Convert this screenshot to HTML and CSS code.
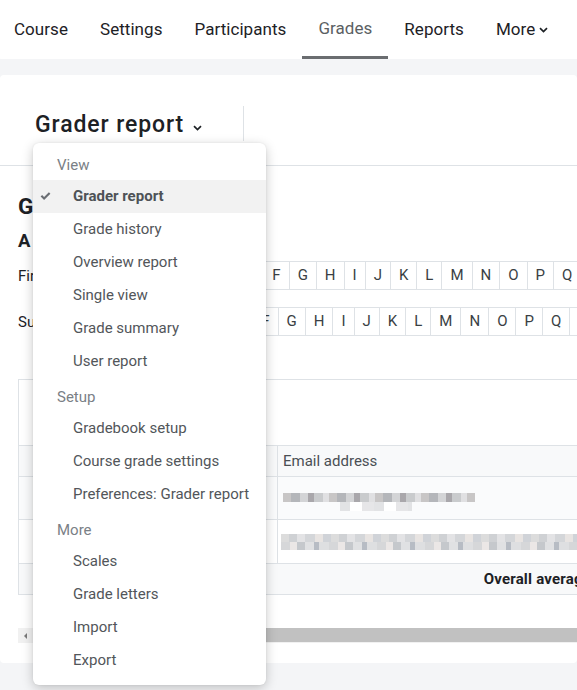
FILE: index.html
```html
<!DOCTYPE html>
<html lang="en">
<head>
<meta charset="utf-8">
<title>Grader report</title>
<link rel="stylesheet" href="styles.css">
</head>
<body>
<nav class="primary">
  <a class="tab">Course</a>
  <a class="tab">Settings</a>
  <a class="tab">Participants</a>
  <a class="tab active">Grades</a>
  <a class="tab">Reports</a>
  <a class="tab">More<svg class="more-chev" width="9" height="6" viewBox="0 0 9 6"><path d="M1 1.2 L4.5 4.6 L8 1.2" fill="none" stroke="#1d2125" stroke-width="1.7"/></svg></a>
</nav>

<main class="card">
  <div class="tertiary">
    <div class="selector">
      <span class="sel-title">Grader report</span>
      <svg class="sel-chev" width="9" height="6" viewBox="0 0 9 6"><path d="M1 1.2 L4.5 4.6 L8 1.2" fill="none" stroke="#1d2125" stroke-width="1.7"/></svg>
    </div>
    <div class="vsep"></div>
  </div>

  <div class="content">
    <h2 class="page-title">Grader report</h2>
    <h3 class="sub-title">All participants: 2/2</h3>

    <div class="initials first">
      <span class="ilabel">First name</span>
      <ul class="letters">
        <li class="all">All</li><li>A</li><li>B</li><li>C</li><li>D</li><li>E</li><li>F</li><li>G</li><li>H</li><li>I</li><li>J</li><li>K</li><li>L</li><li>M</li><li>N</li><li>O</li><li>P</li><li>Q</li><li>R</li><li>S</li><li>T</li>
      </ul>
    </div>
    <div class="initials second">
      <span class="ilabel">Surname</span>
      <ul class="letters">
        <li class="all">All</li><li>A</li><li>B</li><li>C</li><li>D</li><li>E</li><li>F</li><li>G</li><li>H</li><li>I</li><li>J</li><li>K</li><li>L</li><li>M</li><li>N</li><li>O</li><li>P</li><li>Q</li><li>R</li><li>S</li><li>T</li>
      </ul>
    </div>

    <table class="grades">
      <tr class="r-top"><td colspan="3"></td></tr>
      <tr class="r-head"><td class="c-name"></td><td class="c-email">Email address</td><td class="c-rest"></td></tr>
      <tr class="r-user1"><td class="c-name"></td><td class="c-email"><div class="blur b1a"></div><div class="blur b1b"></div></td><td class="c-rest"></td></tr>
      <tr class="r-user2"><td class="c-name"></td><td class="c-email" colspan="2"><div class="blur b2a"></div><div class="blur b2b"></div></td></tr>
      <tr class="r-avg"><td colspan="2" class="c-avg">Overall average</td><td class="c-rest"></td></tr>
    </table>

    <div class="hscroll">
      <div class="hs-btn"><span class="hs-arrow"></span></div>
      <div class="hs-thumb"></div>
    </div>
  </div>
</main>

<div class="menu">
  <div class="m-head">View</div>
  <div class="m-item active"><svg class="check" width="11" height="9" viewBox="0 0 11 9"><path d="M0.6 4.6 L2.1 3.1 L4.1 5.1 L8.9 0.3 L10.4 1.8 L4.1 8.1 Z" fill="#6a6e73"/></svg>Grader report</div>
  <div class="m-item">Grade history</div>
  <div class="m-item">Overview report</div>
  <div class="m-item">Single view</div>
  <div class="m-item">Grade summary</div>
  <div class="m-item">User report</div>
  <div class="m-head group">Setup</div>
  <div class="m-item">Gradebook setup</div>
  <div class="m-item">Course grade settings</div>
  <div class="m-item">Preferences: Grader report</div>
  <div class="m-head group">More</div>
  <div class="m-item">Scales</div>
  <div class="m-item">Grade letters</div>
  <div class="m-item">Import</div>
  <div class="m-item">Export</div>
</div>
</body>
</html>
```

FILE: styles.css
```css
html, body {
  margin: 0;
  padding: 0;
  width: 577px;
  height: 690px;
  overflow: hidden;
}
body {
  position: relative;
  background: #f4f5f7;
  font-family: Roboto, "Liberation Sans", sans-serif;
  color: #1d2125;
}

/* primary navigation */
.primary {
  display: flex;
  height: 59px;
  background: #fff;
  margin-left: -2px;
  border-bottom-left-radius: 4px;
}
.tab {
  display: flex;
  align-items: center;
  padding: 0 16px 2px 16px;
  font-size: 17px;
  letter-spacing: 0.05px;
  color: #1d2125;
  white-space: nowrap;
  box-sizing: border-box;
}
.tab.active {
  color: #5b5f63;
  padding-bottom: 1px;
  border-bottom: 3px solid #6a6d70;
}
.more-chev {
  margin-left: 4px;
  margin-top: 2px;
}

/* page card */
.card {
  margin-top: 16px;
  height: 588px;
  background: #fff;
  overflow: hidden;
  border-radius: 4px;
}
.tertiary {
  display: flex;
  height: 91px;
  border-bottom: 1px solid #dee2e6;
  box-sizing: border-box;
}
.selector {
  width: 208px;
  padding-left: 35px;
  padding-top: 36px;
  display: flex;
  align-items: flex-start;
}
.sel-title {
  font-size: 23px;
  font-weight: 500;
  letter-spacing: 0.9px;
  line-height: 1.2;
  white-space: nowrap;
}
.sel-chev {
  margin-left: 9px;
  margin-top: 14px;
}
.vsep {
  width: 1px;
  height: 35px;
  margin-top: 31px;
  background: #dee2e6;
}

.content {
  padding-left: 18px;
}
.page-title {
  margin: 27px 0 0 0;
  font-size: 22.5px;
  font-weight: 700;
  line-height: 1.2;
  color: #1d2125;
}
.sub-title {
  margin: 10px 0 0 0;
  font-size: 18.5px;
  font-weight: 700;
  letter-spacing: 2px;
  line-height: 1.2;
  color: #1d2125;
}

/* initials bars */
.initials {
  display: flex;
  align-items: center;
  white-space: nowrap;
}
.initials.first { margin-top: 9px; }
.initials.second { margin-top: 17px; }
.ilabel {
  font-size: 15px;
  color: #1d2125;
  margin-right: 9px;
}
.letters {
  display: flex;
  list-style: none;
  margin: 0;
  padding: 0;
}
.letters li {
  font-size: 15px;
  line-height: 27px;
  padding: 0 8px;
  border: 1px solid #dee2e6;
  margin-left: -1px;
  color: #3a3f44;
}
.letters li.all {
  background: #f0f1f3;
}

/* table */
.grades {
  margin-top: 43px;
  border-collapse: collapse;
  width: 900px;
  font-size: 15px;
}
.grades td {
  border: 1px solid #dee2e6;
  padding: 0;
}
.c-name { width: 258px; }
.c-email { width: 318px; padding-left: 5px !important; color: #4a4f54; }
.r-top td { height: 65px; background: #fff; }
.r-head td { height: 30px; background: #f8f9fa; }
.r-user1 td { height: 42px; background: #fafbfc; vertical-align: top; }
.r-user2 td { height: 43px; background: #fff; vertical-align: top; }
.r-avg td { height: 30px; background: #f8f9fa; }
.c-avg {
  text-align: right;
  font-weight: 700;
  letter-spacing: 0.2px;
  padding-right: 10px !important;
  color: #1d2125;
}

.blur { height: 9px; }
.b1a {
  margin-top: 16px;
  width: 192px;
  background: repeating-linear-gradient(90deg, #c8c6c6 0 8px, #b4b6ba 8px 17px, #d3d4d6 17px 25px, #a9a7ab 25px 31px, #c9cbcd 31px 40px, #e0e0e2 40px 46px);
}
.b1b {
  margin-left: 57px;
  width: 72px;
  background: repeating-linear-gradient(90deg, #e2e3e5 0 10px, #ffffff 10px 22px, #e6e6e8 22px 34px);
}
.b2a {
  margin-top: 14px;
  width: 300px;
  height: 8px;
  margin-left: -2px;
  background: repeating-linear-gradient(90deg, #dcdcdc 0 8px, #cfd1d4 8px 16px, #e3e3e5 16px 24px, #d4d6d9 24px 34px, #e8e4e2 34px 42px, #d0d3d8 42px 50px);
}
.b2b {
  width: 300px;
  height: 8px;
  margin-left: -2px;
  background: repeating-linear-gradient(90deg, #d6d7d9 0 9px, #ebe7e6 9px 16px, #c5c8cc 16px 24px, #e0e1e3 24px 33px, #b7bcc4 33px 38px, #dedfe1 38px 48px);
}

/* scrollbar drawing */
.hscroll {
  margin-top: 33px;
  display: flex;
  height: 15px;
  background: #f1f1f1;
  width: 900px;
}
.hs-btn {
  width: 15px;
  display: flex;
  align-items: center;
  justify-content: center;
}
.hs-arrow {
  width: 0;
  height: 0;
  border-top: 3px solid transparent;
  border-bottom: 3px solid transparent;
  border-right: 3px solid #7a7a7a;
}
.hs-thumb {
  flex: 1;
  margin: 0 0 1px 0;
  background: #c1c1c1;
}

/* dropdown menu overlay */
.menu {
  position: absolute;
  left: 33px;
  top: 143px;
  width: 233px;
  padding: 8px 0;
  background: #fff;
  border-radius: 6px;
  box-shadow: 0 3px 12px rgba(0, 0, 0, 0.22), 0 0 2px rgba(0, 0, 0, 0.08);
}
.m-head {
  height: 29px;
  line-height: 29px;
  padding-left: 24px;
  font-size: 15px;
  color: #7a8086;
}
.m-head.group { margin-top: 5px; }
.m-item {
  position: relative;
  height: 33px;
  line-height: 33px;
  padding-left: 40px;
  font-size: 15px;
  color: #52565a;
  white-space: nowrap;
}
.m-item.active {
  background: #f2f2f2;
  font-weight: 700;
  color: #4e5256;
}
.check {
  position: absolute;
  left: 7px;
  top: 12px;
}
```
